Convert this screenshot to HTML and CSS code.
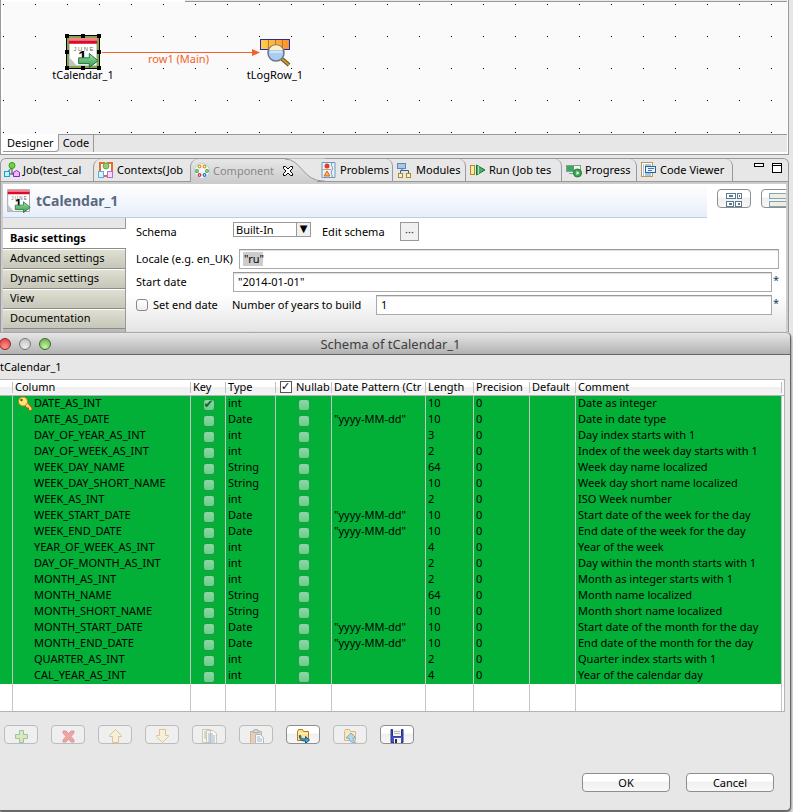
FILE: index.html
```html
<!DOCTYPE html>
<html lang="en">
<head>
<meta charset="utf-8">
<title>Schema of tCalendar_1</title>
<link rel="stylesheet" href="styles.css">
</head>
<body>
<svg class="defs" aria-hidden="true">
  <defs>
    <linearGradient id="g-red" x2="0" y2="1"><stop offset="0" stop-color="#f58c96"/><stop offset="1" stop-color="#e56a78"/></linearGradient>
    <linearGradient id="g-green" x2="0" y2="1"><stop offset="0" stop-color="#a5e0a0"/><stop offset="1" stop-color="#2f9a52"/></linearGradient>
    <linearGradient id="g-orange"><stop offset="0" stop-color="#ffcf4d"/><stop offset="1" stop-color="#ff8f2c"/></linearGradient>
    <pattern id="dots" width="32" height="32" patternUnits="userSpaceOnUse"><rect y="2" width="1" height="1" fill="#000"/></pattern>
    <symbol id="calendar" viewBox="0 0 32 32">
      <rect x="1" y="1" width="29" height="29" fill="#fff" stroke="#8a8a8a"/>
      <rect x="1" y="1" width="29" height="4" fill="url(#g-red)"/>
      <rect x="1" y="4" width="29" height="3" fill="#dc0a28"/>
      <text x="16" y="14" text-anchor="middle" class="cal-month">J U N E</text>
      <path d="M1 20l9 10H1z" fill="#c4c4c4"/><path d="M2 21l7 8" stroke="#fff"/>
      <text x="15" y="25" text-anchor="middle" class="cal-day">1</text>
      <path d="M11 21.500h11v-4.500l9 7.500-9 7v-4H11z" fill="url(#g-green)" stroke="#1f7040"/>
    </symbol>
  </defs>
</svg>

<main class="editor">
  <div class="canvas">
    <svg class="grid" aria-hidden="true"><rect width="100%" height="100%" fill="url(#dots)"/></svg>
    <svg class="link" width="160" height="10" viewBox="0 0 160 10" aria-hidden="true"><path d="M0 5.500h151" stroke="#f4602a"/><path d="M150 2l8 3.500-8 3.500z" fill="#f4602a"/></svg>
    <span class="link-label">row1 (Main)</span>
    <div class="node node-calendar">
      <svg width="36" height="36" viewBox="0 0 36 36">
        <rect x="2.500" y="2.500" width="31" height="31" fill="#fff" stroke="#7fae30" stroke-width="3"/>
        <rect x="1.500" y="1.500" width="33" height="33" fill="none" stroke="#000"/>
        <use href="#calendar" x="3" y="3" width="31" height="31"/>
        <path d="M0 0h4v4H0zM16 0h4v4h-4zM32 0h4v4h-4zM0 16h4v4H0zM32 16h4v4h-4zM0 32h4v4H0zM16 32h4v4h-4zM32 32h4v4h-4z"/>
      </svg>
      <span>tCalendar_1</span>
    </div>
    <div class="node node-log">
      <svg width="32" height="36" viewBox="0 0 32 36">
        <rect x="1.500" y="5.500" width="29" height="10" fill="url(#g-orange)" stroke="#1c2fa8"/>
        <path d="M9.500 6v9M16.500 6v9M23.500 6v9" stroke="#b87a20"/>
        <path d="M22 24l8 7" stroke="#6b4d12" stroke-width="4"/><path d="M22 24l8 7" stroke="#c89a3c" stroke-width="2"/>
        <circle cx="17" cy="19" r="8" fill="#a9cdf0" stroke="#6d7686" stroke-width="1.500"/>
        <path d="M10 16a7.500 7.500 0 0 1 14 0z" fill="#fdf0c0"/><path d="M11 18h12" stroke="#cfe4fa" stroke-width="2"/>
      </svg>
      <span>tLogRow_1</span>
    </div>
  </div>
  <nav class="page-tabs"><a class="current" href="#designer">Designer</a><a href="#code">Code</a></nav>
</main>

<section class="view">
  <nav class="view-tabs">
    <a class="tab t-job" href="#job"><svg viewBox="0 0 16 16"><path d="M8 5L3 11M8 5v7M3 12h10" stroke="#444" fill="none"/><circle cx="8" cy="3.500" r="3" fill="#6ad63a" stroke="#3c9a1c"/><rect x="0.500" y="9.500" width="5" height="5" fill="#bff4ff" stroke="#17a3d8"/><path d="M9.500 10.500l3-2 3 2v4h-6z" fill="#f0b8ff" stroke="#8a22c4"/></svg><span>Job(test_cal</span></a>
    <a class="tab t-ctx" href="#contexts"><svg viewBox="0 0 16 16"><path d="M2 1h4v3h4V1h4v13H2z" fill="#fff" stroke="#ec6a28" stroke-width="2"/><circle cx="8" cy="4" r="3" fill="#8ad070" stroke="#6aa850"/><rect x="0.500" y="9.500" width="5" height="6" fill="#d8f4ff" stroke="#5ab0d8"/><rect x="9.500" y="9.500" width="5" height="6" fill="#f6dcff" stroke="#b070d0"/></svg><span>Contexts(Job</span></a>
    <a class="tab t-comp" href="#component"><svg viewBox="0 0 16 16"><circle cx="8" cy="8" r="7.500" fill="#f2f8fd" stroke="#b9cfe0"/><g fill="#fff" stroke-width="1.300"><circle cx="5.500" cy="3.500" r="1.300" stroke="#e0a020"/><circle cx="10.500" cy="3.500" r="1.300" stroke="#e0a020"/><circle cx="3" cy="8" r="1.300" stroke="#48a838"/><circle cx="13" cy="8" r="1.300" stroke="#48a838"/><circle cx="5.500" cy="12" r="1.300" stroke="#d83030"/><circle cx="10.500" cy="12" r="1.300" stroke="#3070c8"/></g></svg><span>Component</span><svg class="close" viewBox="0 0 12 12"><path d="M1.500 1.500h2L6 4l2.500-2.500h2v2L8 6l2.500 2.500v2h-2L6 8l-2.500 2.500h-2v-2L4 6 1.500 3.500z" fill="#fff" stroke="#000"/></svg><svg class="curve" viewBox="0 0 40 23" aria-hidden="true"><path d="M0 0C16 0 18 22.500 38 22.500H40V0z" fill="#e7e7e7"/><path d="M0 .5C16 .5 18 22.500 38 22.500H40" fill="none" stroke="#999"/></svg></a>
    <a class="tab t-prob" href="#problems"><svg viewBox="0 0 16 16"><path d="M1 .5h13v15H1z" fill="#eaf3fb" stroke="#6f97b8"/><path d="M11 1c-2 3 2 4 0 7s1 5 0 7" stroke="#6f97b8" fill="none"/><path d="M1 7.500h9" stroke="#c2a860"/><circle cx="6" cy="4" r="2.500" fill="#e63838"/><path d="M6 9l3 5H3z" fill="#f8b858" stroke="#d46428"/></svg><span>Problems</span></a>
    <a class="tab t-mod" href="#modules"><svg viewBox="0 0 16 16"><path d="M5 5v4M3.500 11V8.500h8V11" stroke="#34648c" fill="none"/><rect x=".5" y="1.500" width="8" height="5" fill="#a8c8e6" stroke="#5c88b4"/><rect x="1.500" y="11.500" width="4" height="4" fill="#fff3b8" stroke="#b08a28"/><rect x="9.500" y="11.500" width="4" height="4" fill="#fff3b8" stroke="#b08a28"/></svg><span>Modules</span></a>
    <a class="tab t-run" href="#run"><svg viewBox="0 0 16 16"><rect x=".5" y="3.500" width="4" height="9" fill="#ffe9a0" stroke="#b08a28"/><path d="M6.500 3v10L15 8z" fill="#48b060" stroke="#187048"/><path d="M8.500 4v8" stroke="#a8e0b0"/></svg><span>Run (Job tes</span></a>
    <a class="tab t-prog" href="#progress"><svg viewBox="0 0 16 16"><rect x=".5" y="3.500" width="14" height="6" fill="#eef4ee" stroke="#8a9a9a"/><rect x="1" y="4" width="7" height="5" fill="#3fa860"/><path d="M3 11.500h6" stroke="#7a98b8"/><circle cx="11.500" cy="11" r="4" fill="#3fa850" stroke="#217a3a"/><path d="M10.500 9v4l3-2z" fill="#fff"/></svg><span>Progress</span></a>
    <a class="tab t-code" href="#viewer"><svg viewBox="0 0 16 16"><rect x=".5" y=".5" width="11" height="14" fill="#fff" stroke="#b89a50"/><path d="M2 3h8M2 5h8M2 7h8M2 9h8M2 11h8M2 13h8" stroke="#5a8ac0" stroke-dasharray="1 1 6"/><rect x="4.500" y="4.500" width="10" height="6" fill="#e8f2fb" stroke="#2a6298"/><path d="M7 6.500h6M7 8.500h4" stroke="#3a78b0"/></svg><span>Code Viewer</span></a>
    <button class="win-btn" aria-label="Minimize"><svg width="10" height="4"><rect x=".5" y=".5" width="9" height="3" fill="#fff" stroke="#000"/></svg></button>
    <button class="win-btn" aria-label="Maximize"><svg width="10" height="10"><rect x=".5" y=".5" width="9" height="9" fill="#fff" stroke="#000"/><path d="M0 2.500h10" stroke="#000"/></svg></button>
  </nav>
  <div class="view-body">
    <header class="view-head">
      <div class="view-title"><svg width="24" height="24"><use href="#calendar"/></svg><h1>tCalendar_1</h1></div>
      <button class="btn" aria-label="Grid layout"><svg width="16" height="14" viewBox="0 0 16 14" fill="#fff" stroke="#5c7890"><rect x=".5" y=".5" width="9" height="5"/><rect x="11.500" y=".5" width="4" height="5"/><rect x=".5" y="8.500" width="7" height="5"/><rect x="9.500" y="8.500" width="6" height="5"/><path d="M3 3h4M13 3h1M3 11h3M12 11h2" stroke-width="2"/></svg></button>
      <button class="btn" aria-label="List layout"><svg width="18" height="14" viewBox="0 0 18 14" fill="#f1efdc" stroke="#7fa3c0"><rect x=".5" y=".5" width="17" height="5"/><rect x=".5" y="8.500" width="17" height="5"/></svg></button>
    </header>
    <div class="view-cols">
      <nav class="side"><i></i><a class="current" href="#basic">Basic settings</a><a href="#advanced">Advanced settings</a><a href="#dynamic">Dynamic settings</a><a href="#view">View</a><a href="#docs">Documentation</a></nav>
      <form class="form">
        <div class="row row-schema">
          <label class="w-short" for="schema">Schema</label>
          <span class="pick"><select id="schema"><option>Built-In</option></select></span>
          <label class="edit" for="edit">Edit schema</label>
          <button class="dots-btn" id="edit" type="button">···</button>
        </div>
        <div class="row"><label class="w-long" for="locale">Locale (e.g. en_UK)</label><input class="field selected" id="locale" value="&quot;ru&quot;"></div>
        <div class="row"><label class="w-short" for="start">Start date</label><input class="field" id="start" value="&quot;2014-01-01&quot;"><b>*</b></div>
        <div class="row"><input class="tick" type="checkbox" id="end"><label class="w-end" for="end">Set end date</label><label class="w-years" for="years">Number of years to build</label><input class="field" id="years" value="1"><b>*</b></div>
      </form>
    </div>
  </div>
</section>

<section class="dialog">
  <header class="titlebar"><button class="light red" aria-label="Close"></button><button class="light grey" aria-label="Minimize"></button><button class="light green" aria-label="Zoom"></button><h2>Schema of tCalendar_1</h2></header>
  <p class="name">tCalendar_1</p>
  <table class="schema">
    <colgroup><col class="c0"><col class="c1"><col class="c2"><col class="c3"><col class="c4"><col class="c5"><col class="c6"><col class="c7"><col class="c8"><col><col class="c10"></colgroup>
    <thead><tr><th></th><th>Column</th><th>Key</th><th>Type</th><th><input type="checkbox" id="allnull" checked><label for="allnull">Nullab</label></th><th>Date Pattern (Ctr</th><th>Length</th><th>Precision</th><th>Default</th><th>Comment</th><th></th></tr></thead>
    <tbody>
      <tr><td></td><td><svg class="key" width="16" height="16" viewBox="0 0 16 16"><path d="M7 9l3-3 5 6v2l-2 1-1.500-1v-2H10z" fill="#ffd060" stroke="#a85a10"/><circle cx="6" cy="5.500" r="4.500" fill="#ffe97a" stroke="#c07818"/><circle cx="4.500" cy="4" r="1.200" fill="#7a4a10"/></svg>DATE_AS_INT</td><td><input type="checkbox" aria-label="Key" checked></td><td>int</td><td><input type="checkbox" aria-label="Nullable"></td><td></td><td>10</td><td>0</td><td></td><td>Date as integer</td><td></td></tr>
      <tr><td></td><td>DATE_AS_DATE</td><td><input type="checkbox" aria-label="Key"></td><td>Date</td><td><input type="checkbox" aria-label="Nullable"></td><td>"yyyy-MM-dd"</td><td>10</td><td>0</td><td></td><td>Date in date type</td><td></td></tr>
      <tr><td></td><td>DAY_OF_YEAR_AS_INT</td><td><input type="checkbox" aria-label="Key"></td><td>int</td><td><input type="checkbox" aria-label="Nullable"></td><td></td><td>3</td><td>0</td><td></td><td>Day index starts with 1</td><td></td></tr>
      <tr><td></td><td>DAY_OF_WEEK_AS_INT</td><td><input type="checkbox" aria-label="Key"></td><td>int</td><td><input type="checkbox" aria-label="Nullable"></td><td></td><td>2</td><td>0</td><td></td><td>Index of the week day starts with 1</td><td></td></tr>
      <tr><td></td><td>WEEK_DAY_NAME</td><td><input type="checkbox" aria-label="Key"></td><td>String</td><td><input type="checkbox" aria-label="Nullable"></td><td></td><td>64</td><td>0</td><td></td><td>Week day name localized</td><td></td></tr>
      <tr><td></td><td>WEEK_DAY_SHORT_NAME</td><td><input type="checkbox" aria-label="Key"></td><td>String</td><td><input type="checkbox" aria-label="Nullable"></td><td></td><td>10</td><td>0</td><td></td><td>Week day short name localized</td><td></td></tr>
      <tr><td></td><td>WEEK_AS_INT</td><td><input type="checkbox" aria-label="Key"></td><td>int</td><td><input type="checkbox" aria-label="Nullable"></td><td></td><td>2</td><td>0</td><td></td><td>ISO Week number</td><td></td></tr>
      <tr><td></td><td>WEEK_START_DATE</td><td><input type="checkbox" aria-label="Key"></td><td>Date</td><td><input type="checkbox" aria-label="Nullable"></td><td>"yyyy-MM-dd"</td><td>10</td><td>0</td><td></td><td>Start date of the week for the day</td><td></td></tr>
      <tr><td></td><td>WEEK_END_DATE</td><td><input type="checkbox" aria-label="Key"></td><td>Date</td><td><input type="checkbox" aria-label="Nullable"></td><td>"yyyy-MM-dd"</td><td>10</td><td>0</td><td></td><td>End date of the week for the day</td><td></td></tr>
      <tr><td></td><td>YEAR_OF_WEEK_AS_INT</td><td><input type="checkbox" aria-label="Key"></td><td>int</td><td><input type="checkbox" aria-label="Nullable"></td><td></td><td>4</td><td>0</td><td></td><td>Year of the week</td><td></td></tr>
      <tr><td></td><td>DAY_OF_MONTH_AS_INT</td><td><input type="checkbox" aria-label="Key"></td><td>int</td><td><input type="checkbox" aria-label="Nullable"></td><td></td><td>2</td><td>0</td><td></td><td>Day within the month starts with 1</td><td></td></tr>
      <tr><td></td><td>MONTH_AS_INT</td><td><input type="checkbox" aria-label="Key"></td><td>int</td><td><input type="checkbox" aria-label="Nullable"></td><td></td><td>2</td><td>0</td><td></td><td>Month as integer starts with 1</td><td></td></tr>
      <tr><td></td><td>MONTH_NAME</td><td><input type="checkbox" aria-label="Key"></td><td>String</td><td><input type="checkbox" aria-label="Nullable"></td><td></td><td>64</td><td>0</td><td></td><td>Month name localized</td><td></td></tr>
      <tr><td></td><td>MONTH_SHORT_NAME</td><td><input type="checkbox" aria-label="Key"></td><td>String</td><td><input type="checkbox" aria-label="Nullable"></td><td></td><td>10</td><td>0</td><td></td><td>Month short name localized</td><td></td></tr>
      <tr><td></td><td>MONTH_START_DATE</td><td><input type="checkbox" aria-label="Key"></td><td>Date</td><td><input type="checkbox" aria-label="Nullable"></td><td>"yyyy-MM-dd"</td><td>10</td><td>0</td><td></td><td>Start date of the month for the day</td><td></td></tr>
      <tr><td></td><td>MONTH_END_DATE</td><td><input type="checkbox" aria-label="Key"></td><td>Date</td><td><input type="checkbox" aria-label="Nullable"></td><td>"yyyy-MM-dd"</td><td>10</td><td>0</td><td></td><td>End date of the month for the day</td><td></td></tr>
      <tr><td></td><td>QUARTER_AS_INT</td><td><input type="checkbox" aria-label="Key"></td><td>int</td><td><input type="checkbox" aria-label="Nullable"></td><td></td><td>2</td><td>0</td><td></td><td>Quarter index starts with 1</td><td></td></tr>
      <tr><td></td><td>CAL_YEAR_AS_INT</td><td><input type="checkbox" aria-label="Key"></td><td>int</td><td><input type="checkbox" aria-label="Nullable"></td><td></td><td>4</td><td>0</td><td></td><td>Year of the calendar day</td><td></td></tr>
      <tr class="blank"><td></td><td></td><td></td><td></td><td></td><td></td><td></td><td></td><td></td><td></td><td></td></tr>
    </tbody>
  </table>
  <div class="tools">
    <button class="btn" disabled aria-label="Add"><svg viewBox="0 0 16 14"><path d="M6.500 1.500h4v4h4v4h-4v4h-4v-4h-4v-4h4z" fill="#c8dc70" stroke="#2f9068"/></svg></button>
    <button class="btn" disabled aria-label="Remove"><svg viewBox="0 0 16 14"><path d="M3 2h3l2.500 3L11 2h3v2l-3 3.500 3 3.500v2h-3l-2.500-3L6 13H3v-2l3-3.500L3 4z" fill="#f04848" stroke="#c83030"/></svg></button>
    <button class="btn" disabled aria-label="Move up"><svg viewBox="0 0 16 14"><path d="M8.500.5l6 6v1h-3v6h-6v-6h-3v-1z" fill="#fff1c0" stroke="#d08a20"/></svg></button>
    <button class="btn" disabled aria-label="Move down"><svg viewBox="0 0 16 14"><path d="M8.500 13.500l6-6v-1h-3v-6h-6v6h-3v1z" fill="#fff1c0" stroke="#d08a20"/></svg></button>
    <button class="btn" disabled aria-label="Copy"><svg viewBox="0 0 16 14"><path d="M1.500 .5h8v13h-8zM5.500 1.500h7l3 3v10h-10z" fill="#fff" stroke="#b09850"/><path d="M3 3h2M3 5h2M3 7h2M3 9h2M7 5h5M7 7h7M7 9h7M7 11h7M7 13h7" stroke="#4878b0"/></svg></button>
    <button class="btn" disabled aria-label="Paste"><svg viewBox="0 0 16 14"><rect x="2.500" y="2.500" width="11" height="12" fill="#e8a860" stroke="#a87030"/><path d="M5 3.500h6v-2H9.500v-1h-3v1H5z" fill="#b8c0cc" stroke="#667"/><path d="M7.500 5.500h5l3 3v6h-8z" fill="#fff" stroke="#5880b0"/><path d="M9 8h3M9 10h5M9 12h5" stroke="#4878b0"/></svg></button>
    <button class="btn" aria-label="Import"><svg viewBox="0 0 16 14"><path d="M2.500 11.500v-9l1-2h4l1 2h5v9z" fill="#ffdf90" stroke="#b87818"/><path d="M3 4.500h10" stroke="#fff3c8"/><path d="M5.500 6.500c0 3 2 3.500 5 3.500V7.500l4 3.500-4 3.500V12c-4 0-6-1-6-5.500z" fill="#48a0d0" stroke="#185880"/></svg></button>
    <button class="btn" disabled aria-label="Export"><svg viewBox="0 0 16 14"><path d="M2.500 11.500v-9l1-2h4l1 2h5v9z" fill="#ffdf90" stroke="#b87818"/><path d="M9 4l5 5h-3c0 3 1 4 3 4.500-4 .5-7-1-7-4.500H4z" fill="#68c0e0" stroke="#185880"/></svg></button>
    <button class="btn" aria-label="Save"><svg viewBox="0 0 16 14"><path d="M2 .5h1.500V7h9V.5H14v13H2z" fill="#4850c0" stroke="#28308c"/><rect x="4" y="0" width="8" height="7" fill="#f4f4f4"/><path d="M5 2.500h6M5 4.500h6" stroke="#b8b8b8"/><rect x="5" y="9" width="7" height="5" fill="#f4f4f4"/><rect x="6" y="10" width="2" height="4" fill="#222870"/></svg></button>
  </div>
  <div class="actions"><button class="btn push">OK</button><button class="btn push">Cancel</button></div>
</section>
</body>
</html>
```
FILE: styles.css
```css
*, ::before, ::after { box-sizing: border-box; }

body {
  margin: 0;
  display: flex;
  flex-direction: column;
  min-height: 100vh;
  background: #e7e7e7;
  color: #000;
  font: 11px/16px "Noto Sans", sans-serif;
  overflow-x: hidden;
}

a { color: inherit; text-decoration: none; }
button, input, select { font: inherit; color: inherit; margin: 0; padding: 0; }
h1, h2, p { margin: 0; }
svg { display: block; flex: none; }
.defs { position: absolute; width: 0; height: 0; }
.cal-month { font: 6px "Liberation Sans", sans-serif; fill: #666; }
.cal-day { font: bold 16px "Liberation Sans", sans-serif; fill: #000; }

/* Designer */
.editor {
  margin-right: 4px;
  padding: 0 1px 2px 2px;
  border: solid #999;
  border-width: 0 1px 1px;
  background: #fff;
}
.editor::before { content: ""; display: block; height: 2px; margin-left: 182px; border-bottom: 1px solid #999; background: #e7e7e7; }
.canvas { position: relative; height: 132px; background: #fafafa; }
.grid { width: 100%; height: 100%; }
.link { position: absolute; left: 99px; top: 45px; }
.link-label { position: absolute; left: 145px; top: 49px; color: #f4602a; }
.node { position: absolute; display: flex; flex-direction: column; align-items: center; width: 80px; }
.node span { line-height: 10px; }
.node-calendar { left: 40px; top: 32px; }
.node-log { left: 232px; top: 32px; }
.page-tabs { display: flex; height: 18px; border-top: 1px solid #999; background: #e7e7e7; }
.page-tabs a { padding: 0 4px; border-right: 1px solid #999; }
.page-tabs .current { background: #fff; margin-top: -1px; padding-top: 1px; border-bottom: 1px solid #999; border-radius: 0 0 4px 0; }

/* View */
.view { margin: 3px 4px 0 0; border: solid #999; border-width: 1px 1px 0; border-radius: 6px 6px 0 0; background: #ccc; }
.view-tabs { display: flex; height: 23px; border-bottom: 1px solid #999; background: #e7e7e7; border-radius: 5px 5px 0 0; }
.tab { position: relative; display: flex; align-items: center; gap: 3px; height: 22px; padding-left: 4px; border-right: 1px solid #999; border-top-right-radius: 7px; white-space: nowrap; }
.tab > svg { width: 16px; height: 16px; }
.t-job { width: 92px; padding-left: 3px; }
.t-ctx { width: 97px; }
.t-comp { width: 127px; height: 23px; padding-left: 3px; border: 0; color: #888; background: linear-gradient(#e7e7e7, #ccc); }
.t-job, .t-ctx { border-right: 0; }
.t-ctx, .t-comp { border-left: 1px solid #999; border-top-left-radius: 8px; }
.tab > .close { width: 12px; height: 12px; margin-left: 5px; position: relative; z-index: 1; }
.tab > .curve { position: absolute; right: -8px; top: -1px; width: 40px; height: 24px; }
.t-prob { width: 76px; }
.t-mod { width: 73px; }
.t-run { width: 96px; }
.t-prog { width: 75px; }
.t-code { width: 96px; margin-right: auto; }
.win-btn { align-self: flex-start; margin: 4px 6px 0 2px; border: 0; background: none; }

.view-body { margin: 2px 2px 0; background: linear-gradient(#fff 75%, #e4e4e4); }
.view-head { display: flex; align-items: flex-start; gap: 10px; height: 34px; overflow: hidden; }
.view-title { flex: 1; display: flex; align-items: center; gap: 5px; height: 34px; padding-left: 4px; border-bottom: 1px solid #b9cde5; background: linear-gradient(#fff, #e8eefa); }
.view-title h1 { font-size: 14px; color: #5a6a7d; }
.view-head .btn { margin-top: 5px; }
.view-head .btn:last-child { margin-right: -9px; }

.btn {
  flex: none;
  display: flex;
  justify-content: center;
  align-items: flex-end;
  width: 34px;
  height: 19px;
  border: 1px solid #8e8e8e;
  border-radius: 4px;
  background: linear-gradient(#fff 40%, #f0f0f0 50%, #f8f8f8);
}
.btn:disabled { border-color: #bcbcbc; background: #efefef; }
.btn:disabled svg { opacity: .45; }

.view-cols { display: flex; height: 114px; }
.side { flex: none; width: 123px; border-right: 1px solid #999; background: #bbb; }
.side i { display: block; height: 11px; border-bottom: 1px solid #999; background: #e7e7e7; }
.side a { display: block; height: 20px; padding-left: 7px; line-height: 16px; border-top: 1px solid #fff; border-bottom: 1px solid #8c8c84; background: linear-gradient(#dfdfd2, #c6c7b8); }
.side .current { margin-right: -1px; background: #fff; font-weight: bold; }

.form { flex: 1; min-width: 0; display: flex; flex-direction: column; gap: 3px; padding: 0 7px 0 10px; }
.row { display: flex; align-items: center; height: 20px; white-space: nowrap; }
.row-schema { align-items: flex-start; height: 28px; padding-top: 4px; line-height: 20px; }
.w-short { width: 97px; }
.w-long { width: 103px; }
.w-end { width: 79px; }
.w-years { width: 144px; }
.edit { width: 78px; margin-left: 11px; }
.pick { position: relative; width: 78px; height: 15px; }
.pick select { appearance: none; display: block; width: 100%; height: 15px; padding-left: 2px; border: 1px solid #999; border-radius: 0; background: #fff; line-height: 13px; }
.pick::after { content: "▼"; position: absolute; right: 0; top: 0; width: 15px; height: 15px; border: 1px solid #999; background: #f0f0f0; font: 10px/12px "DejaVu Sans", sans-serif; text-align: center; pointer-events: none; }
.dots-btn { width: 19px; height: 19px; border: 1px solid #999; background: #f0f0f0; line-height: 12px; color: #333; }
.field { flex: 1; min-width: 0; height: 20px; padding: 0 4px 1px; border: 1px solid #aaa; border-top-color: #999; background: #fff; box-shadow: inset 0 1px 1px #ddd; }
.selected { background: linear-gradient(#ccc, #ccc) 3px 2px / 20px 14px no-repeat, #fff; }
.row b { align-self: flex-start; width: 7px; padding-left: 1px; color: #1a4060; font-weight: normal; }
.tick { appearance: none; width: 12px; height: 12px; margin-right: 5px; border: 1px solid #888; border-radius: 3px; background: linear-gradient(#fff, #eee); }

/* Schema dialog */
.dialog { flex: 1; display: flex; flex-direction: column; margin: 0 2px 1px 0; border: solid #666; border-width: 0 1px 1px 0; border-radius: 0 5px 5px 0; background: #e7e7e7; box-shadow: 0 2px 3px #555; }
.titlebar { display: flex; align-items: center; gap: 8px; height: 23px; border-top: 1px solid #aaa; border-bottom: 1px solid #666; border-radius: 0 5px 0 0; background: linear-gradient(#e6e6e6, #b2b2b2); }
.titlebar h2 { flex: 1; margin-right: 68px; font-size: 13px; font-weight: normal; color: #404040; text-align: center; }
.light { width: 12px; height: 12px; border: 1px solid #777; border-radius: 50%; }
.red { margin-left: -1px; border-color: #8a2a2a; background: radial-gradient(circle at 50% 80%, #ff9a90, #e03030); }
.grey { background: radial-gradient(circle at 50% 80%, #eee, #bbb); }
.green { border-color: #3a6a2a; background: radial-gradient(circle at 50% 80%, #c8f5a0, #5cab48); }
.name { height: 24px; line-height: 24px; }

.schema { table-layout: fixed; width: calc(100% - 5px); border-collapse: separate; border-spacing: 0; border: solid #b4b4b4; border-width: 1px 1px 1px 0; background: #fff; }
.c0 { width: 13px; } .c1 { width: 178px; } .c2 { width: 35px; } .c3 { width: 50px; }
.c4 { width: 56px; } .c5 { width: 94px; } .c6 { width: 48px; } .c7 { width: 56px; }
.c8 { width: 46px; } .c10 { width: 2px; }
.schema th, .schema td { height: 16px; padding: 0 0 0 2px; border-right: 1px solid #c4c4c4; font-weight: normal; text-align: left; vertical-align: top; line-height: 14px; white-space: nowrap; overflow: hidden; }
.schema th { border-right: 0; border-bottom: 1px solid #b4b4b4; background: linear-gradient(#c0c0c0, #c0c0c0) right 2px / 1px 11px no-repeat, linear-gradient(#fff 45%, #f0f0f0 50%, #f4f4f4); }
.schema td { background: #02b038; }
.schema th:last-child { background: #f8f8f8; }
.schema td:last-child { border: 0; padding: 0; background: #fff; }
.schema td:nth-child(2) { position: relative; padding-left: 21px; }
.schema .key { position: absolute; left: 4px; top: 0; }
.schema input { appearance: none; display: block; width: 12px; height: 12px; margin: 3px auto 0; border: 1px solid #1f9a48; border-radius: 3px; background: linear-gradient(#8ad8a2, #70cc8c); }
.schema td:nth-child(3), .schema td:nth-child(5) { padding: 0 0 0 1px; }
.schema td input:checked::after { content: "✔"; display: block; font: 12px/8px "DejaVu Sans", sans-serif; color: #106830; }
.schema th input { float: left; width: 12px; height: 12px; margin: 1px 4px 0 2px; border: 1px solid #555; border-radius: 0; background: #fff; }
.schema th input::after { content: "✓"; display: block; font: bold 11px/10px "DejaVu Sans", sans-serif; }
.schema .blank td { height: 27px; background: #fff; }

.tools { display: flex; gap: 13px; padding: 13px 4px 0; }
.tools svg { width: 16px; height: 14px; }
.actions { display: flex; justify-content: flex-end; gap: 16px; margin-top: auto; padding: 0 16px 18px 0; }
.push { width: 88px; align-items: center; line-height: 17px; }
```
